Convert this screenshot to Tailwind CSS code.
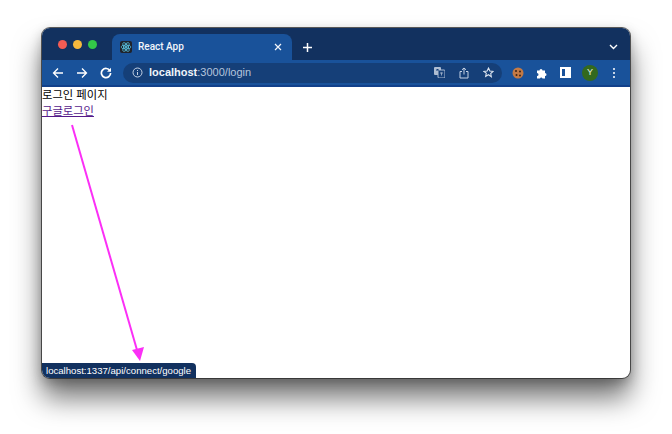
<!DOCTYPE html>
<html lang="ko">

<head>
    <meta charset="UTF-8" />
    <meta name="viewport" content="width=device-width, initial-scale=1" />
    <title>React App</title>
    <script src="https://cdn.jsdelivr.net/npm/@tailwindcss/browser@4"></script>
</head>

<body class="bg-white overflow-hidden font-['Liberation_Sans',sans-serif]">
  <div class="w-[672px] h-[434px] pt-[28px] pl-[42px]">

    <!-- Browser window -->
    <div class="relative w-[588px] h-[350px] rounded-[8px] overflow-hidden bg-white flex flex-col shadow-[0_0_0_1px_rgba(40,40,40,0.75),0_20px_28px_rgba(0,0,0,0.55),0_4px_12px_rgba(0,0,0,0.25)]">

      <!-- Tab strip -->
      <div class="h-[32px] shrink-0 bg-[#12315f] flex items-end">
        <div class="w-[70px] h-[32px] pl-[16px] flex items-center gap-[6px]">
          <span class="w-[9px] h-[9px] rounded-full bg-[#f25c54]"></span>
          <span class="w-[9px] h-[9px] rounded-full bg-[#f5b83d]"></span>
          <span class="w-[9px] h-[9px] rounded-full bg-[#33c748]"></span>
        </div>
        <!-- Active tab -->
        <div class="w-[180px] h-[26px] bg-[#19529a] rounded-t-[8px] flex items-center pl-[8px] pr-[10px]">
          <div class="w-[12px] h-[12px] rounded-[2px] bg-[#20232a] flex items-center justify-center">
            <svg width="12" height="12" viewBox="0 0 24 24" fill="none" stroke="#61dafb" stroke-width="1.3">
              <circle cx="12" cy="12" r="2" fill="#61dafb" stroke="none" />
              <ellipse cx="12" cy="12" rx="10" ry="4" />
              <ellipse cx="12" cy="12" rx="10" ry="4" transform="rotate(60 12 12)" />
              <ellipse cx="12" cy="12" rx="10" ry="4" transform="rotate(120 12 12)" />
            </svg>
          </div>
          <span class="ml-[6px] text-[10px] font-medium text-[#f2f5fa] leading-none font-['Roboto',sans-serif]">React App</span>
          <svg class="ml-auto" width="8" height="8" viewBox="0 0 8 8" stroke="#f2f5fa" stroke-width="1.2">
            <path d="M1 1l6 6M7 1L1 7" />
          </svg>
        </div>
        <svg class="ml-[10px] mb-[7px]" width="11" height="11" viewBox="0 0 11 11" stroke="#ffffff" stroke-width="1.5">
          <path d="M5.500 1v9M1 5.500h9" />
        </svg>
        <svg class="ml-auto mr-[12px] mb-[10px]" width="9" height="6" viewBox="0 0 9 6" fill="none" stroke="#ffffff" stroke-width="1.4">
          <path d="M1 1l3.500 3.500L8 1" />
        </svg>
      </div>

      <!-- Toolbar -->
      <div class="h-[27px] shrink-0 bg-[#19529a] border-b-2 border-[#12408a] flex items-center pl-[10px]">
        <svg width="12" height="12" viewBox="0 0 12 12" fill="none" stroke="#ffffff" stroke-width="1.3">
          <path d="M11 6H1.500M6 1.500L1.500 6 6 10.500" />
        </svg>
        <svg class="ml-[12px]" width="12" height="12" viewBox="0 0 12 12" fill="none" stroke="#ffffff" stroke-width="1.3">
          <path d="M1 6h9.500M6 1.500L10.500 6 6 10.500" />
        </svg>
        <svg class="ml-[12px]" width="12" height="12" viewBox="0 0 12 12" fill="none" stroke="#ffffff" stroke-width="1.7">
          <path d="M10 3.800A4.600 4.600 0 1 0 10.600 6" />
          <path d="M11 .8v4H7z" fill="#ffffff" stroke="none" />
        </svg>

        <!-- Address bar -->
        <div class="ml-[11px] w-[379px] h-[20px] rounded-full bg-[#153f78] flex items-center pl-[9px] pr-[8px]">
          <svg width="11" height="11" viewBox="0 0 11 11" fill="none" stroke="#c5d2e4" stroke-width="1">
            <circle cx="5.500" cy="5.500" r="4.500" />
            <path d="M5.500 5v3M5.500 3v1" />
          </svg>
          <span class="ml-[6px] text-[11px] leading-none text-[#b5c5dc]"><span class="font-bold text-[#f0f4fa]">localhost</span>:3000/login</span>
          <!-- Translate -->
          <svg class="ml-auto" width="11" height="11" viewBox="0 0 11 11">
            <rect x="0" y="0" width="7" height="8" rx="1" fill="#aebdd2" />
            <rect x="4" y="3" width="7" height="8" rx="1" fill="#153f78" stroke="#aebdd2" />
            <path d="M2 3h3M3.500 2v1" stroke="#153f78" />
            <path d="M6 6h3M7.500 5.500v3" stroke="#aebdd2" stroke-width=".8" />
          </svg>
          <!-- Share -->
          <svg class="ml-[14px]" width="10" height="12" viewBox="0 0 10 12" fill="none" stroke="#c5d2e4">
            <path d="M3 4.500H1v6.500h8V4.500H7M5 7.500V1M3 2.800L5 1l2 1.800" />
          </svg>
          <!-- Star -->
          <svg class="ml-[14px]" width="11" height="11" viewBox="0 0 12 12" fill="none" stroke="#dbe3ee" stroke-width="1.200">
            <path d="M6 1.200l1.500 3.200 3.500.4-2.600 2.300.7 3.500L6 8.400l-3.100 1.800.7-3.500L1 4.800l3.500-.4z" />
          </svg>
        </div>

        <!-- Extensions -->
        <svg class="ml-[10px]" width="12" height="12" viewBox="0 0 12 12">
          <circle cx="6" cy="6" r="5.500" fill="#c47a45" />
          <circle cx="4" cy="4" r="1" fill="#3d2314" />
          <circle cx="8" cy="4.500" r="1" fill="#3d2314" />
          <circle cx="4.500" cy="8" r="1" fill="#3d2314" />
          <circle cx="8" cy="8.500" r="1" fill="#3d2314" />
        </svg>
        <svg class="ml-[12px]" width="12" height="12" viewBox="0 0 12 12" fill="#ffffff">
          <path d="M1 3.500h2.500a1.500 1.500 0 0 1 3 0H9V6a1.500 1.500 0 0 1 0 3v2.500H6.500a1.300 1.300 0 0 0-2.500 0H1V9a1.500 1.500 0 0 0 0-3z" />
        </svg>
        <div class="ml-[12px] w-[11px] h-[11px] bg-white flex justify-start pl-[2px] py-[2px]">
          <div class="w-[3px] h-full bg-[#19529a]"></div>
        </div>
        <div class="ml-[11px] w-[16px] h-[16px] rounded-full bg-[#33691e] flex items-center justify-center text-[9px] text-[#e6efe0] leading-none">Y</div>
        <div class="ml-[15px] flex flex-col gap-[2px]">
          <span class="w-[2px] h-[2px] bg-white rounded-full"></span>
          <span class="w-[2px] h-[2px] bg-white rounded-full"></span>
          <span class="w-[2px] h-[2px] bg-white rounded-full"></span>
        </div>
      </div>

      <!-- Page -->
      <div class="flex-1 -mt-[1px] text-[11.3px] leading-[16px] text-black font-['Noto_Sans_CJK_KR',sans-serif]">
        <p>로그인 페이지</p>
        <a href="#google" class="block w-fit underline text-[#551a8b]">구글로그인</a>
      </div>

      <!-- Status bubble -->
      <div class="absolute left-0 bottom-0 w-[154px] h-[15px] bg-[#12315f] rounded-tr-[4px] flex items-center pl-[4px] text-[9.600px] text-white leading-none">localhost:1337/api/connect/google</div>
    </div>

    <!-- Annotation arrow -->
    <svg class="absolute left-0 top-0 pointer-events-none" width="672" height="434" viewBox="0 0 672 434" fill="none">
      <path d="M72 125L137 350" stroke="#fb2ff6" stroke-width="2" />
      <path d="M132 350L144 347L140 361z" fill="#fb2ff6" />
    </svg>
  </div>
</body>

</html>
